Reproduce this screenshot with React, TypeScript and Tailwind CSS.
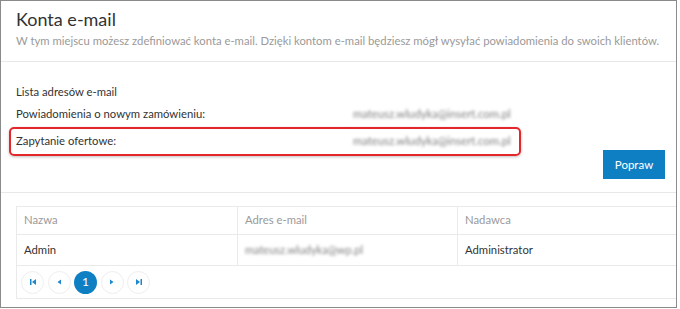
import React from 'react';

const EMAIL = 'mateusz.wludyka@insert.com.pl';

function PageBtn({ children, active }: { children: React.ReactNode; active?: boolean }) {
  return (
    <div
      className={`w-[23px] h-[23px] rounded-full flex items-center justify-center text-[12px] ${
        active ? 'bg-[#0f7fc4] text-white' : 'border border-[#eeeeee] text-[#1e88cc]'
      }`}
    >
      {children}
    </div>
  );
}

export default function App() {
  return (
    <div className="w-[680px] h-[309px] bg-white font-['Lato',sans-serif] text-[#333333]">
      <div className="w-[677px] h-[308px] border border-[#8a8a8a] overflow-hidden flex flex-col">
        {/* header */}
        <div className="h-[61px] px-[15px] pt-[5px] border-b border-[#e8e8e8]">
          <h1 className="text-[18px] leading-[26px] text-[#333]">Konta e-mail</h1>
          <p className="text-[11.3px] leading-[18px] text-[#9a9a9a] whitespace-nowrap">
            W tym miejscu możesz zdefiniować konta e-mail. Dzięki kontom e-mail będziesz mógł wysyłać powiadomienia do swoich klientów.
          </p>
        </div>

        {/* email list */}
        <div className="px-[15px] pt-[19px] text-[11.3px]">
          <div className="h-[22px] leading-[22px]">Lista adresów e-mail</div>
          <div className="h-[22px] flex items-center">
            <span className="w-[337px]">Powiadomienia o nowym zamówieniu:</span>
            <span className="text-[11.3px] text-[#808080] blur-[1.4px]">{EMAIL}</span>
          </div>
          <div className="mt-[2px] ml-[-7px] w-[512px] h-[29px] px-[5px] flex items-center border-2 border-[#e5262b] rounded-[5px] shadow-[0_1px_3px_rgba(0,0,0,0.25)]">
            <span className="w-[337px]">Zapytanie ofertowe:</span>
            <span className="text-[11.3px] text-[#808080] blur-[1.4px]">{EMAIL}</span>
          </div>
        </div>

        <div className="flex justify-end pr-[11px] mt-[-6px]">
          <button className="w-[62px] h-[29px] bg-[#0f7fc4] text-white text-[11.5px]">Popraw</button>
        </div>

        <div className="mt-[13px] border-b border-[#e8e8e8]" />

        {/* table */}
        <div className="pl-[15px] pt-[13px]">
          <div className="w-[663px] border border-[#eaeaea] text-[11.3px]">
            <div className="grid grid-cols-[221px_220px_1fr] h-[28px] border-b border-[#eaeaea] text-[#9a9a9a]">
              <div className="px-[7px] flex items-center border-r border-[#eaeaea]">Nazwa</div>
              <div className="px-[7px] flex items-center border-r border-[#eaeaea]">Adres e-mail</div>
              <div className="px-[7px] flex items-center">Nadawca</div>
            </div>
            <div className="grid grid-cols-[221px_220px_1fr] h-[31px] border-b border-[#eaeaea]">
              <div className="px-[7px] flex items-center border-r border-[#eaeaea]">Admin</div>
              <div className="px-[7px] flex items-center border-r border-[#eaeaea]">
                <span className="text-[11px] text-[#808080] blur-[1.4px]">mateusz.wludyka@wp.pl</span>
              </div>
              <div className="px-[7px] flex items-center">Administrator</div>
            </div>
            <div className="h-[32px] flex items-center gap-[3.5px] pl-[4px]">
              <PageBtn>
                <svg width="8" height="8" viewBox="0 0 8 8" fill="currentColor">
                  <rect x="1" y="1" width="1.5" height="6" />
                  <path d="M7 1 L3 4 L7 7 Z" />
                </svg>
              </PageBtn>
              <PageBtn>
                <svg width="8" height="8" viewBox="0 0 8 8" fill="currentColor">
                  <path d="M6 1.5 L2.5 4 L6 6.5 Z" />
                </svg>
              </PageBtn>
              <PageBtn active>1</PageBtn>
              <PageBtn>
                <svg width="8" height="8" viewBox="0 0 8 8" fill="currentColor">
                  <path d="M2 1.5 L5.5 4 L2 6.5 Z" />
                </svg>
              </PageBtn>
              <PageBtn>
                <svg width="8" height="8" viewBox="0 0 8 8" fill="currentColor">
                  <path d="M1 1 L5 4 L1 7 Z" />
                  <rect x="5.5" y="1" width="1.5" height="6" />
                </svg>
              </PageBtn>
            </div>
          </div>
        </div>
      </div>
    </div>
  );
}
